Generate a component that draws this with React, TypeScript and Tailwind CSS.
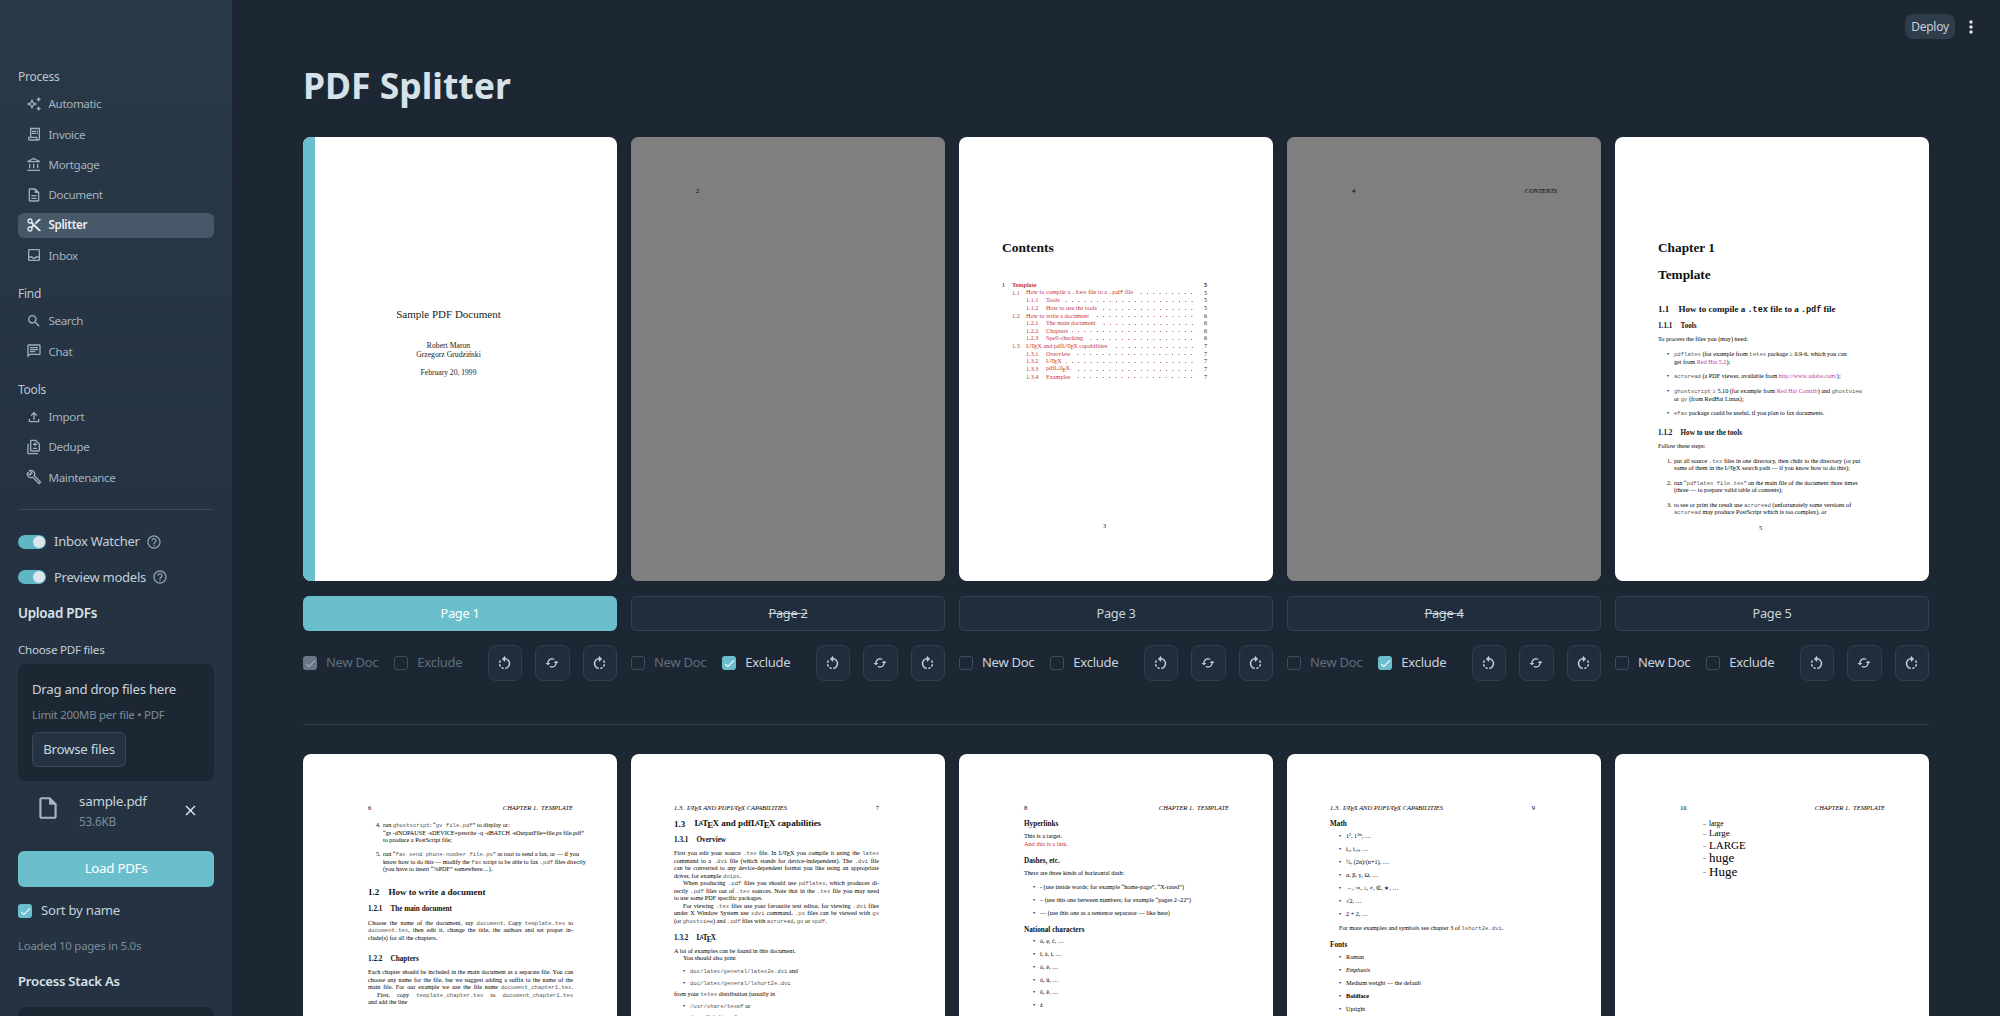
import type { ReactNode } from "react";
import {
  MdOutlineAutoAwesome,
  MdOutlineReceiptLong,
  MdOutlineAccountBalance,
  MdOutlineDescription,
  MdContentCut,
  MdOutlineInbox,
  MdOutlineSearch,
  MdOutlineChat,
  MdOutlineFileUpload,
  MdOutlineDifference,
  MdOutlineBuild,
  MdOutlineRotateLeft,
  MdOutlineRotateRight,
  MdOutlineCached,
  MdOutlineInsertDriveFile,
  MdClose,
  MdCheck,
  MdMoreVert,
  MdOutlineHelpOutline,
} from "react-icons/md";

const sections = [
  {
    label: "Process",
    items: [
      { name: "Automatic", icon: MdOutlineAutoAwesome },
      { name: "Invoice", icon: MdOutlineReceiptLong },
      { name: "Mortgage", icon: MdOutlineAccountBalance },
      { name: "Document", icon: MdOutlineDescription },
      { name: "Splitter", icon: MdContentCut, active: true },
      { name: "Inbox", icon: MdOutlineInbox },
    ],
  },
  {
    label: "Find",
    items: [
      { name: "Search", icon: MdOutlineSearch },
      { name: "Chat", icon: MdOutlineChat },
    ],
  },
  {
    label: "Tools",
    items: [
      { name: "Import", icon: MdOutlineFileUpload },
      { name: "Dedupe", icon: MdOutlineDifference },
      { name: "Maintenance", icon: MdOutlineBuild },
    ],
  },
];

function Toggle({ label }: { label: string }) {
  return (
    <div className="flex h-[20px] items-center">
      <div className="flex h-[14px] w-[28px] items-center justify-end rounded-full bg-[#5fb6c4] pr-[1px]">
        <div className="h-[12px] w-[12px] rounded-full bg-[#dbe6ec]" />
      </div>
      <span className="ml-[8px] text-[13px] tracking-[-0.02em] text-[#c3d0da]">{label}</span>
      <MdOutlineHelpOutline className="ml-[6px] text-[#8d9dab]" size={16} />
    </div>
  );
}

function Sidebar() {
  return (
    <aside className="flex h-full w-[232px] shrink-0 flex-col overflow-hidden bg-gradient-to-b from-[#2a3948] via-[#243241] to-[#243241] px-[18px] pt-[67px] [&>*]:shrink-0">
      {sections.map((s, i) => (
        <div key={s.label} className={i === 0 ? "" : "mt-[16px]"}>
          <div className="flex h-[20px] items-center text-[12px] tracking-[-0.02em] text-[#b9c7d2]">{s.label}</div>
          <div className="mt-[4.5px] flex flex-col gap-[5.3px]">
            {s.items.map((it) => (
              <div
                key={it.name}
                className={
                  "flex h-[25px] items-center rounded-[6px] pl-[8px] text-[11.6px] tracking-[-0.03em] " +
                  (it.active ? "bg-[#475869] font-semibold text-[#e9eff3]" : "text-[#a3b3c0]")
                }
              >
                <it.icon size={16} className={it.active ? "text-[#e9eff3]" : "text-[#9fafbc]"} />
                <span className="ml-[6.5px]">{it.name}</span>
              </div>
            ))}
          </div>
        </div>
      ))}
      <div className="mt-[19px] h-px bg-[#3b4a59]" />
      <div className="mt-[22px] flex flex-col gap-[15.5px]">
        <Toggle label="Inbox Watcher" />
        <Toggle label="Preview models" />
      </div>
      <div className="mt-[15px] flex h-[22px] items-center text-[13.4px] font-semibold tracking-[-0.02em] text-[#d9e3ea]">Upload PDFs</div>
      <div className="mt-[15px] flex h-[20px] items-center text-[11.6px] tracking-[-0.02em] text-[#c3d0da]">Choose PDF files</div>
      <div className="mt-[5px] flex h-[117px] flex-col rounded-[8px] bg-[#1c2733] px-[14px] pt-[16px]">
        <div className="flex h-[20px] items-center text-[13.2px] tracking-[-0.02em] text-[#c9d5de]">Drag and drop files here</div>
        <div className="mt-[4px] flex h-[20px] items-center text-[11.4px] tracking-[-0.02em] text-[#7d8c99]">Limit 200MB per file • PDF</div>
        <div className="mt-[8px] flex h-[35px] w-[94px] items-center justify-center rounded-[6px] border border-[#3a4857] bg-[#243241] text-[13.3px] tracking-[-0.02em] text-[#c9d5de]">
          Browse files
        </div>
      </div>
      <div className="mt-[5px] flex h-[50px] items-center">
        <MdOutlineInsertDriveFile size={26} className="-mt-[6px] ml-[17px] text-[#a6b5c1]" />
        <div className="ml-[18px] flex w-[80px] flex-col">
          <span className="text-[13.4px] leading-[20px] tracking-[-0.02em] text-[#c9d5de]">sample.pdf</span>
          <span className="text-[11.8px] leading-[20px] tracking-[-0.02em] text-[#7d8c99]">53.6KB</span>
        </div>
        <MdClose size={17} className="-mt-[2px] ml-[23px] text-[#dfe7ec]" />
      </div>
      <div className="mt-[15px] flex h-[36px] items-center justify-center rounded-[6px] bg-[#6bbfcc] text-[13.3px] tracking-[-0.02em] text-white">
        Load PDFs
      </div>
      <div className="mt-[14px] flex h-[20px] items-center">
        <div className="flex h-[14px] w-[14px] items-center justify-center rounded-[3px] bg-[#6bbfcc]">
          <MdCheck size={13} className="text-white" />
        </div>
        <span className="ml-[9px] text-[13.2px] tracking-[-0.02em] text-[#c3d0da]">Sort by name</span>
      </div>
      <div className="mt-[14px] flex h-[20px] items-center text-[11.4px] tracking-[-0.02em] text-[#7d8c99]">Loaded 10 pages in 5.0s</div>
      <div className="mt-[16px] flex h-[22px] items-center text-[13.2px] font-semibold tracking-[-0.02em] text-[#d9e3ea]">Process Stack As</div>
      <div className="mt-[14px] h-[40px] rounded-[8px] bg-[#1c2733]" />
    </aside>
  );
}

/* ---- tiny pdf thumbnails ---- */

function Tt({ children }: { children: ReactNode }) {
  return <span className="font-['Liberation_Mono',monospace] text-[5.6px] text-[#555]">{children}</span>;
}

function Pink({ children }: { children: ReactNode }) {
  return <span className="text-[#c2399a]">{children}</span>;
}

// the LaTeX logo, in letters that sit a little up and down
function Ltx() {
  return (
    <span className="whitespace-nowrap">
      L<span className="relative -top-[0.18em] -ml-[0.3em] text-[0.72em]">A</span>
      <span className="-ml-[0.12em]">T</span>
      <span className="relative top-[0.2em] -ml-[0.1em]">E</span>
      <span className="-ml-[0.1em]">X</span>
    </span>
  );
}

function Sec({ n, t, className = "" }: { n: string; t: ReactNode; className?: string }) {
  return (
    <div className={"flex h-[10px] items-center text-[9px] leading-[10px] font-bold text-[#111] " + className}>
      <span className="w-[20.5px] shrink-0">{n}</span>
      <span className="whitespace-nowrap">{t}</span>
    </div>
  );
}

function Sub({ n, t, className = "" }: { n: string; t: ReactNode; className?: string }) {
  return (
    <div className={"flex h-[8px] items-center text-[7.2px] leading-[8px] font-bold text-[#111] " + className}>
      {n && <span className="w-[22.5px] shrink-0">{n}</span>}
      <span>{t}</span>
    </div>
  );
}

function Ln({ children, className = "", j }: { children: ReactNode; className?: string; j?: boolean }) {
  return (
    <div
      className={
        "h-[7.5px] whitespace-nowrap text-[6.2px] leading-[7.5px] text-black " +
        (j ? "text-justify [text-align-last:justify] " : "") +
        className
      }
    >
      {children}
    </div>
  );
}

function Li({ mark = "•", lines, className = "" }: { mark?: string; lines: ReactNode[]; className?: string }) {
  return (
    <div className={"relative pl-[16px] " + className}>
      <span className="absolute left-[9px] top-0 text-[6.2px] leading-[7.5px] text-black">{mark}</span>
      {lines.map((l, i) => (
        <Ln key={i}>{l}</Ln>
      ))}
    </div>
  );
}

function Head({ num, title, even }: { num: string; title: ReactNode; even: boolean }) {
  return (
    <div className="flex h-[8px] items-center justify-between whitespace-pre text-[6.5px] leading-[8px] text-black">
      {even ? <span>{num}</span> : <span className="italic">{title}</span>}
      {even ? <span className="italic">{title}</span> : <span>{num}</span>}
    </div>
  );
}

const toc: [number, string, ReactNode, string][] = [
  [0, "1", "Template", "5"],
  [1, "1.1", <>How to compile a <span className="font-['Liberation_Mono',monospace]">.tex</span> file to a <span className="font-['Liberation_Mono',monospace]">.pdf</span> file</>, "5"],
  [2, "1.1.1", "Tools", "5"],
  [2, "1.1.2", "How to use the tools", "5"],
  [1, "1.2", "How to write a document", "6"],
  [2, "1.2.1", "The main document", "6"],
  [2, "1.2.2", "Chapters", "6"],
  [2, "1.2.3", "Spell-checking", "6"],
  [1, "1.3", <><Ltx /> and pdf<Ltx /> capabilities</>, "7"],
  [2, "1.3.1", "Overview", "7"],
  [2, "1.3.2", <Ltx />, "7"],
  [2, "1.3.3", <>pdf<Ltx /></>, "7"],
  [2, "1.3.4", "Examples", "7"],
];

function Page1() {
  return (
    <div className="flex h-full flex-col items-center pl-[43px] pr-[66px] pt-[169px] font-['Liberation_Serif',serif] text-[#222]">
      <div className="flex w-full justify-center text-[11px] leading-[16px]">Sample PDF Document</div>
      <div className="mt-[19px] text-[7.7px] leading-[9px]">Robert Maron</div>
      <div className="text-[7.7px] leading-[9px]">Grzegorz Grudziński</div>
      <div className="mt-[9px] text-[7.6px] leading-[9px]">February 20, 1999</div>
    </div>
  );
}

function Page2() {
  return (
    <div className="pl-[65px] pr-[44px] pt-[50px] font-['Liberation_Serif',serif]">
      <Head num="2" title="" even />
    </div>
  );
}

function Page3() {
  return (
    <div className="flex h-full flex-col pl-[43px] pr-[66px] pt-[102px] font-['Liberation_Serif',serif]">
      <div className="h-[18px] text-[13.5px] leading-[18px] font-bold text-[#111]">Contents</div>
      <div className="mt-[24px] flex flex-col">
        {toc.map(([lvl, n, t, p]) => (
          <div key={n} className="flex h-[7.63px] items-center text-[6.2px] leading-[7.63px] text-[#c8343f]">
            {lvl === 0 && <b className="w-[10px] shrink-0">{n}</b>}
            {lvl === 0 && <b className="grow">{t}</b>}
            {lvl === 1 && <span className="ml-[10px] w-[14px] shrink-0">{n}</span>}
            {lvl === 2 && <span className="ml-[24px] w-[20px] shrink-0">{n}</span>}
            {lvl !== 0 && <span className="whitespace-nowrap">{t}</span>}
            {lvl !== 0 && (
              <span className="ml-[4px] mb-[1px] h-[3px] grow self-end bg-[radial-gradient(circle,#9a4a55_0.45px,transparent_0.6px)] bg-[length:6.3px_3px] bg-right" />
            )}
            <span className={"ml-[9px] shrink-0 text-[#222] " + (lvl === 0 ? "font-bold" : "")}>{p}</span>
          </div>
        ))}
      </div>
      <div className="mt-[142px] text-center text-[6.2px] leading-[8px] text-[#222]">3</div>
    </div>
  );
}

function Page4() {
  return (
    <div className="pl-[65px] pr-[44px] pt-[50px] font-['Liberation_Serif',serif]">
      <Head num="4" title="CONTENTS" even />
    </div>
  );
}

function Page5() {
  return (
    <div className="pl-[43px] pr-[66px] pt-[103px] font-['Liberation_Serif',serif]">
      <div className="text-[13.3px] leading-[16px] font-bold text-[#111]">Chapter 1</div>
      <div className="mt-[11px] text-[13.3px] leading-[16px] font-bold text-[#111]">Template</div>
      <Sec
        n="1.1"
        className="mt-[21px]"
        t={<>How to compile a <span className="font-['Liberation_Mono',monospace] text-[8.5px]">.tex</span> file to a <span className="font-['Liberation_Mono',monospace] text-[8.5px]">.pdf</span> file</>}
      />
      <Sub n="1.1.1" t="Tools" className="mt-[8px]" />
      <Ln className="mt-[5px]">To process the files you (may) need:</Ln>
      <Li className="mt-[7.5px]" lines={[<><Tt>pdflatex</Tt> (for example from <Tt>tetex</Tt> package ≥ 0.9-6, which you can</>, <>get from <Pink>Red Hat 5.2</Pink>);</>]} />
      <Li className="mt-[7px]" lines={[<><Tt>acroread</Tt> (a PDF viewer, available from <Pink>http://www.adobe.com/</Pink>);</>]} />
      <Li className="mt-[7.5px]" lines={[<><Tt>ghostscript</Tt> ≥ 5.10 (for example from <Pink>Red Hat Contrib</Pink>) and <Tt>ghostview</Tt></>, <>or <Tt>gv</Tt> (from RedHat Linux);</>]} />
      <Li className="mt-[6.5px]" lines={[<><Tt>efax</Tt> package could be useful, if you plan to fax documents.</>]} />
      <Sub n="1.1.2" t="How to use the tools" className="mt-[12.75px]" />
      <Ln className="mt-[5px]">Follow these steps:</Ln>
      <Li mark="1." className="mt-[7.5px]" lines={[<>put all source <Tt>.tex</Tt> files in one directory, then chdir to the directory (or put</>, <>some of them in the <Ltx /> search path — if you know how to do this);</>]} />
      <Li mark="2." className="mt-[7px]" lines={[<>run “<Tt>pdflatex file.tex</Tt>” on the main file of the document three times</>, <>(three — to prepare valid table of contents);</>]} />
      <Li mark="3." className="mt-[7px]" lines={[<>to see or print the result use <Tt>acroread</Tt> (unfortunately some versions of</>, <><Tt>acroread</Tt> may produce PostScript which is too complex), or</>]} />
      <Ln className="mt-[8px] text-center">5</Ln>
    </div>
  );
}

function Page6() {
  return (
    <div className="pl-[65px] pr-[44px] pt-[50px] font-['Liberation_Serif',serif]">
      <Head num="6" title="CHAPTER 1.  TEMPLATE" even />
      <Li mark="4." className="mt-[9.25px] -ml-[1px]" lines={[<>run <Tt>ghostscript</Tt>: “<Tt>gv file.pdf</Tt>” to display or:</>, <>“gs -dNOPAUSE -sDEVICE=pswrite -q -dBATCH -sOutputFile=file.ps file.pdf”</>, <>to produce a PostScript file;</>]} />
      <Li mark="5." className="mt-[6.5px] -ml-[1px]" lines={[<>run “<Tt>fax send phone-number file.ps</Tt>” as root to send a fax, or — if you</>, <>know how to do this — modify the <Tt>fax</Tt> script to be able to fax <Tt>.pdf</Tt> files directly</>, <>(you have to insert “%PDF” somewhere…).</>]} />
      <Sec n="1.2" t="How to write a document" className="mt-[14.25px]" />
      <Sub n="1.2.1" t="The main document" className="mt-[8px]" />
      <Ln j className="mt-[5.75px]">Choose the name of the document, say <Tt>document</Tt>. Copy <Tt>template.tex</Tt> to</Ln>
      <Ln j><Tt>document.tex</Tt>, then edit it, change the title, the authors and set proper in-</Ln>
      <Ln>clude(s) for all the chapters.</Ln>
      <Sub n="1.2.2" t="Chapters" className="mt-[13.75px]" />
      <Ln j className="mt-[5.25px]">Each chapter should be included in the main document as a separate file. You can</Ln>
      <Ln j>choose any name for the file, but we suggest adding a suffix to the name of the</Ln>
      <Ln j>main file. For our example we use the file name <Tt>document_chapter1.tex</Tt>.</Ln>
      <Ln j className="pl-[9px]">First, copy <Tt>template_chapter.tex</Tt> to <Tt>document_chapter1.tex</Tt></Ln>
      <Ln>and add the line</Ln>
    </div>
  );
}

function Page7() {
  return (
    <div className="pl-[43px] pr-[66px] pt-[50px] font-['Liberation_Serif',serif]">
      <Head num="7" title={<>1.3.  <Ltx /> AND PDF<Ltx /> CAPABILITIES</>} even={false} />
      <Sec n="1.3" t={<><Ltx /> and pdf<Ltx /> capabilities</>} className="mt-[6.5px]" />
      <Sub n="1.3.1" t="Overview" className="mt-[7.5px]" />
      <Ln j className="mt-[5.25px]">First you edit your source <Tt>.tex</Tt> file. In <Ltx /> you compile it using the <Tt>latex</Tt></Ln>
      <Ln j>command to a <Tt>.dvi</Tt> file (which stands for device-independent). The <Tt>.dvi</Tt> file</Ln>
      <Ln j>can be converted to any device-dependent format you like using an appropriate</Ln>
      <Ln>driver, for example <Tt>dvips</Tt>.</Ln>
      <Ln j className="pl-[9px]">When producing <Tt>.pdf</Tt> files you should use <Tt>pdflatex</Tt>, which produces di-</Ln>
      <Ln j>rectly <Tt>.pdf</Tt> files out of <Tt>.tex</Tt> sources. Note that in the <Tt>.tex</Tt> file you may need</Ln>
      <Ln>to use some PDF specific packages.</Ln>
      <Ln j className="pl-[9px]">For viewing <Tt>.tex</Tt> files use your favourite text editor, for viewing <Tt>.dvi</Tt> files</Ln>
      <Ln j>under X Window System use <Tt>xdvi</Tt> command, <Tt>.ps</Tt> files can be viewed with <Tt>gv</Tt></Ln>
      <Ln>(or <Tt>ghostview</Tt>) and <Tt>.pdf</Tt> files with <Tt>acroread</Tt>, <Tt>gv</Tt> or <Tt>xpdf</Tt>.</Ln>
      <Sub n="1.3.2" t={<Ltx />} className="mt-[10px]" />
      <Ln className="mt-[4.25px]">A lot of examples can be found in this document.</Ln>
      <Ln className="pl-[9px]">You should also print</Ln>
      <Li className="mt-[5px]" lines={[<><Tt>doc/latex/general/latex2e.dvi</Tt> and</>]} />
      <Li className="mt-[4.5px]" lines={[<Tt>doc/latex/general/lshort2e.dvi</Tt>]} />
      <Ln className="mt-[3.5px]">from your <Tt>tetex</Tt> distribution (usually in</Ln>
      <Li className="mt-[4.5px]" lines={[<><Tt>/usr/share/texmf</Tt> or</>]} />
      <Li className="mt-[4px]" lines={[<Tt>/usr/lib/texmf</Tt>]} />
    </div>
  );
}

function Page8() {
  const chars = ["ó, ę, ć, …", "ł, à, ì, …", "ò, è, …", "ö, ü, …", "ô, ê, …", "ż"];
  return (
    <div className="pl-[65px] pr-[44px] pt-[50px] font-['Liberation_Serif',serif]">
      <Head num="8" title="CHAPTER 1.  TEMPLATE" even />
      <Sub n="" t="Hyperlinks" className="mt-[8px]" />
      <Ln className="mt-[4.25px]">This is a target.</Ln>
      <Ln><span className="text-[#c8343f]">And this is a link.</span></Ln>
      <Sub n="" t="Dashes, etc." className="mt-[9.75px]" />
      <Ln className="mt-[4.25px]">There are three kinds of horizontal dash:</Ln>
      <Li className="mt-[6.5px]" lines={["- (use inside words; for example “home-page”, “X-rated”)"]} />
      <Li className="mt-[5.5px]" lines={["– (use this one between numbers; for example “pages 2–22”)"]} />
      <Li className="mt-[5.5px]" lines={["— (use this one as a sentence separator — like here)"]} />
      <Sub n="" t="National characters" className="mt-[9.25px]" />
      <div className="mt-[3.25px] flex flex-col gap-[5.3px]">
        {chars.map((c) => (
          <Li key={c} lines={[c]} />
        ))}
      </div>
    </div>
  );
}

function Page9() {
  const math = ["1², 1²ᵐ, …", "i₀, i₂ₙ, …", "½, (2n)/(n+1), …", "α, β, γ, Ω, …", "→, ⇒, ≥, ≠, ∈, ∗, …", "√2, …", "2 + 2, …"];
  const fonts: ReactNode[] = ["Roman", <i>Emphasis</i>, "Medium weight — the default", <b>Boldface</b>, "Upright"];
  return (
    <div className="pl-[43px] pr-[66px] pt-[50px] font-['Liberation_Serif',serif]">
      <Head num="9" title={<>1.3.  <Ltx /> AND PDF<Ltx /> CAPABILITIES</>} even={false} />
      <Sub n="" t="Math" className="mt-[8px]" />
      <div className="mt-[4.25px] flex flex-col gap-[5.5px]">
        {math.map((m) => (
          <Li key={m} lines={[m]} />
        ))}
      </div>
      <Ln className="mt-[6.5px] pl-[9px]">For more examples and symbols see chapter 3 of <Tt>lshort2e.dvi</Tt>.</Ln>
      <Sub n="" t="Fonts" className="mt-[9.25px]" />
      <div className="mt-[4.25px] flex flex-col gap-[5.5px]">
        {fonts.map((f, i) => (
          <Li key={i} lines={[f]} />
        ))}
      </div>
    </div>
  );
}

function Page10() {
  const sizes = [
    { t: "large", c: "text-[7.3px] leading-[9px]" },
    { t: "Large", c: "text-[9px] leading-[11px]" },
    { t: "LARGE", c: "text-[11px] leading-[13px]" },
    { t: "huge", c: "text-[13px] leading-[12px]" },
    { t: "Huge", c: "text-[13px] leading-[16px]" },
  ];
  return (
    <div className="pl-[65px] pr-[44px] pt-[50px] font-['Liberation_Serif',serif]">
      <Head num="10" title="CHAPTER 1.  TEMPLATE" even />
      <div className="mt-[7px] flex flex-col pl-[23px] text-black">
        {sizes.map((s) => (
          <div key={s.t} className={"flex items-center " + s.c}>
            <span className="w-[6px] text-[6.2px]">–</span>
            <span>{s.t}</span>
          </div>
        ))}
      </div>
    </div>
  );
}

function Thumb({ excluded, bar, children }: { excluded?: boolean; bar?: boolean; children: ReactNode }) {
  return (
    <div className="relative h-[444px] overflow-hidden rounded-[8px] bg-white">
      {children}
      {excluded && <div className="absolute inset-0 bg-black/50" />}
      {bar && <div className="absolute inset-y-0 left-0 w-[12px] bg-[#6bbfcc]" />}
    </div>
  );
}

function Check({ on, disabled, label }: { on?: boolean; disabled?: boolean; label: string }) {
  return (
    <div className="flex items-center">
      <div
        className={
          "flex h-[14px] w-[14px] items-center justify-center rounded-[3px] " +
          (on ? (disabled ? "bg-[#6a7683]" : "bg-[#6bbfcc]") : "border border-[#3e4c5b]")
        }
      >
        {on && <MdCheck size={13} className={disabled ? "text-[#a8b2bb]" : "text-white"} />}
      </div>
      <span className={"ml-[9px] text-[13px] tracking-[-0.02em] " + (disabled ? "text-[#5f6e7b]" : "text-[#c9d5de]")}>{label}</span>
    </div>
  );
}

function IconBtn({ children }: { children: ReactNode }) {
  return (
    <div className="flex h-[36px] w-[34.5px] items-center justify-center rounded-[8px] border border-[#303e4d] bg-[#1f2d3c] text-[#c9d5de]">
      {children}
    </div>
  );
}

const pages = [
  { n: 1, body: <Page1 />, active: true, newDoc: { on: true, disabled: true }, excl: { disabled: true } },
  { n: 2, body: <Page2 />, excluded: true, newDoc: { disabled: true }, excl: { on: true } },
  { n: 3, body: <Page3 />, newDoc: {}, excl: {} },
  { n: 4, body: <Page4 />, excluded: true, newDoc: { disabled: true }, excl: { on: true } },
  { n: 5, body: <Page5 />, newDoc: {}, excl: {} },
];

function PageCard({ p }: { p: (typeof pages)[number] }) {
  return (
    <div className="flex flex-col">
      <Thumb excluded={p.excluded} bar={p.active}>
        {p.body}
      </Thumb>
      <div
        className={
          "mt-[15px] flex h-[35px] items-center justify-center rounded-[6px] text-[12.8px] tracking-[-0.02em] " +
          (p.active
            ? "bg-[#6bbfcc] text-white"
            : "border border-[#324050] bg-[#1f2d3c] text-[#c9d5de] " + (p.excluded ? "line-through" : ""))
        }
      >
        Page {p.n}
      </div>
      <div className="mt-[14px] flex h-[36px] items-center justify-between">
        <div className="flex items-center gap-[16px]">
          <Check label="New Doc" {...p.newDoc} />
          <Check label="Exclude" {...p.excl} />
        </div>
        <div className="flex gap-[13px]">
          <IconBtn><MdOutlineRotateLeft size={17} /></IconBtn>
          <IconBtn><MdOutlineCached size={14} /></IconBtn>
          <IconBtn><MdOutlineRotateRight size={17} /></IconBtn>
        </div>
      </div>
    </div>
  );
}

export default function App() {
  return (
    <div className="flex h-screen w-full overflow-hidden bg-[#1c2733] font-['Noto_Sans',sans-serif]">
      <Sidebar />
      <main className="relative flex-1 overflow-hidden pl-[71px] pr-[71px] pt-[58px]">
        <div className="absolute right-[45px] top-[14px] flex h-[25px] w-[50px] items-center justify-center rounded-[8px] bg-[#2f3c4a] text-[12px] tracking-[-0.02em] text-[#c3d0da]">
          Deploy
        </div>
        <MdMoreVert size={20} className="absolute right-[19px] top-[17px] text-[#dfe7ec]" />
        <h1 className="h-[54px] text-[35.5px] leading-[54px] font-bold text-[#d5e2ea]">PDF Splitter</h1>
        <div className="mt-[25px] grid grid-cols-5 gap-[14px]">
          {pages.map((p) => (
            <PageCard key={p.n} p={p} />
          ))}
        </div>
        <div className="mt-[43px] h-px bg-[#2f3c4a]" />
        <div className="mt-[29px] grid grid-cols-5 gap-[14px]">
          <Thumb><Page6 /></Thumb>
          <Thumb><Page7 /></Thumb>
          <Thumb><Page8 /></Thumb>
          <Thumb><Page9 /></Thumb>
          <Thumb><Page10 /></Thumb>
        </div>
      </main>
    </div>
  );
}
